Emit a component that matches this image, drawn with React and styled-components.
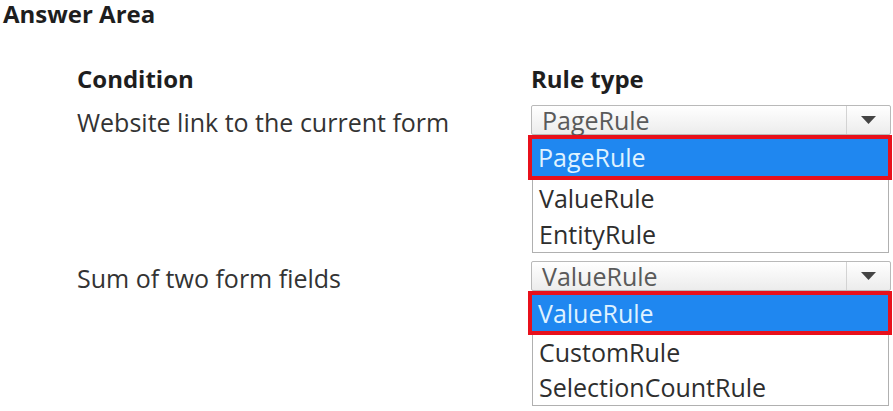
import React from "react";
import styled, { createGlobalStyle } from "styled-components";

const Global = createGlobalStyle`
  body {
    margin: 0;
    background: #ffffff;
    font-family: "Open Sans", "Noto Sans", sans-serif;
    color: #2b2b2b;
  }
`;

const Page = styled.div`
  width: 893px;
  height: 411px;
  overflow: hidden;
`;

const Heading = styled.h1`
  margin: 0;
  padding: 1px 0 0 3px;
  font-size: 24px;
  line-height: 26px;
  font-weight: 700;
  color: #1e1e1e;
`;

const Grid = styled.div`
  display: grid;
  grid-template-columns: 454px 360px;
  margin: 37px 0 0 77px;
  row-gap: 8px;
`;

const ColTitle = styled.div`
  font-size: 24px;
  font-weight: 700;
  line-height: 30px;
  color: #1e1e1e;
  margin-bottom: 3px;
`;

const Condition = styled.div`
  font-size: 25px;
  line-height: 32px;
  color: #333;
  padding-top: 1px;
`;

const Dropdown = styled.div`
  display: flex;
  flex-direction: column;
`;

const Select = styled.div`
  display: flex;
  height: 28px;
  border: 1px solid #b9b9b9;
  border-radius: 2px;
  background: linear-gradient(#ffffff, #ececec);
`;

const SelectValue = styled.div`
  flex: 1;
  padding-left: 10px;
  font-size: 25px;
  line-height: 28px;
  color: #5a5a5a;
  white-space: nowrap;
`;

const ArrowCell = styled.div`
  width: 43px;
  border-left: 1px solid #d3d3d3;
  display: flex;
  align-items: center;
  justify-content: center;
`;

const List = styled.div`
  width: 357px;
  margin-left: 1px;
  border: 1px solid #b0b0b0;
  border-top: none;
  box-sizing: border-box;
`;

const Option = styled.div`
  font-size: 25px;
  white-space: nowrap;
  height: ${(p) => p.$h}px;
  line-height: ${(p) => p.$h}px;
  padding-left: 6px;
  color: #2e2e2e;
`;

const ActiveOption = styled(Option)`
  height: ${(p) => p.$h + 1}px;
  line-height: ${(p) => p.$h + 1}px;
  color: #dff2ff;
  background: #1f87f0;
  border: 4px solid #e8101b;
  margin: 0 -4px 0 -5px;
  padding-left: 6px;
`;

function Arrow() {
  return (
    <svg width="15" height="8" viewBox="0 0 15 8">
      <path d="M0 0 H15 L7.5 8 Z" fill="#444" />
    </svg>
  );
}

function RuleDropdown({ value, options, active, rowHeight }) {
  return (
    <Dropdown>
      <Select>
        <SelectValue>{value}</SelectValue>
        <ArrowCell>
          <Arrow />
        </ArrowCell>
      </Select>
      <List>
        {options.map((o) =>
          o === active ? (
            <ActiveOption key={o} $h={rowHeight}>
              {o}
            </ActiveOption>
          ) : (
            <Option key={o} $h={rowHeight}>
              {o}
            </Option>
          )
        )}
      </List>
    </Dropdown>
  );
}

export default function App() {
  return (
    <Page>
      <Global />
      <Heading>Answer Area</Heading>
      <Grid>
        <ColTitle>Condition</ColTitle>
        <ColTitle>Rule type</ColTitle>
        <Condition>Website link to the current form</Condition>
        <RuleDropdown
          value="PageRule"
          active="PageRule"
          rowHeight={36}
          options={["PageRule", "ValueRule", "EntityRule"]}
        />
        <Condition>Sum of two form fields</Condition>
        <RuleDropdown
          value="ValueRule"
          active="ValueRule"
          rowHeight={35}
          options={["ValueRule", "CustomRule", "SelectionCountRule"]}
        />
      </Grid>
    </Page>
  );
}
